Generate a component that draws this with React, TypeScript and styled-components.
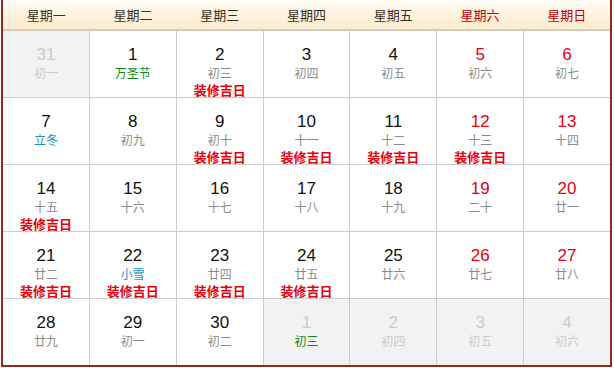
import React from "react";
import styled, { createGlobalStyle } from "styled-components";

const Global = createGlobalStyle`
  html, body { margin: 0; padding: 0; background: #fff; }
  body { font-family: "Liberation Sans", "Noto Sans CJK SC", sans-serif; }
`;

const Frame = styled.div`
  margin-left: 1px;
  width: 611px;
  box-sizing: border-box;
  border-left: 2px solid #8e2c1c;
  border-right: 2px solid #8e2c1c;
  border-bottom: 2px solid #8e2c1c;
`;

const Head = styled.div`
  display: grid;
  grid-template-columns: repeat(7, 1fr);
  height: 29px;
  background: linear-gradient(#fffcf5, #fdebcc);
  border-bottom: 2px solid #d3cbbf;
`;

const HeadCell = styled.div<{ $weekend?: boolean }>`
  display: flex;
  align-items: center;
  justify-content: center;
  font-size: 13px;
  color: ${(p) => (p.$weekend ? "#c0000b" : "#3a2e1e")};
  font-family: "Noto Sans CJK SC", sans-serif;
`;

const Grid = styled.div`
  display: grid;
  grid-template-columns: repeat(7, 1fr);
  grid-auto-rows: 66px;
  gap: 1px;
  background: #cccccc;
`;

const Cell = styled.div<{ $other?: boolean }>`
  background: ${(p) => (p.$other ? "#f2f2f2" : "#fff")};
  display: flex;
  flex-direction: column;
  align-items: center;
  padding-top: 15px;
  box-sizing: border-box;
`;

const Num = styled.div<{ $tone: "normal" | "weekend" | "other" }>`
  font-family: "Liberation Sans", sans-serif;
  font-size: 17px;
  line-height: 18px;
  color: ${(p) =>
    p.$tone === "weekend" ? "#e4000f" : p.$tone === "other" ? "#cccccc" : "#111"};
`;

const Lunar = styled.div<{ $tone: "normal" | "fest" | "term" | "other" }>`
  margin-top: 1px;
  font-family: "Noto Sans CJK SC", sans-serif;
  font-size: 12px;
  line-height: 15px;
  color: ${(p) =>
    p.$tone === "fest"
      ? "#138a13"
      : p.$tone === "term"
      ? "#1a8fc1"
      : p.$tone === "other"
      ? "#cccccc"
      : "#8a8a8a"};
`;

const Tag = styled.div`
  margin-top: 2px;
  font-family: "Noto Sans CJK SC", sans-serif;
  font-size: 13px;
  font-weight: bold;
  line-height: 15px;
  color: #e8000c;
`;

type Day = {
  n: number;
  l: string;
  other?: boolean;
  lt?: "normal" | "fest" | "term" | "other";
  tag?: boolean;
};

const heads = ["星期一", "星期二", "星期三", "星期四", "星期五", "星期六", "星期日"];

const days: Day[] = [
  { n: 31, l: "初一", other: true, lt: "other" },
  { n: 1, l: "万圣节", lt: "fest" },
  { n: 2, l: "初三", tag: true },
  { n: 3, l: "初四" },
  { n: 4, l: "初五" },
  { n: 5, l: "初六" },
  { n: 6, l: "初七" },
  { n: 7, l: "立冬", lt: "term" },
  { n: 8, l: "初九" },
  { n: 9, l: "初十", tag: true },
  { n: 10, l: "十一", tag: true },
  { n: 11, l: "十二", tag: true },
  { n: 12, l: "十三", tag: true },
  { n: 13, l: "十四" },
  { n: 14, l: "十五", tag: true },
  { n: 15, l: "十六" },
  { n: 16, l: "十七" },
  { n: 17, l: "十八" },
  { n: 18, l: "十九" },
  { n: 19, l: "二十" },
  { n: 20, l: "廿一" },
  { n: 21, l: "廿二", tag: true },
  { n: 22, l: "小雪", lt: "term", tag: true },
  { n: 23, l: "廿四", tag: true },
  { n: 24, l: "廿五", tag: true },
  { n: 25, l: "廿六" },
  { n: 26, l: "廿七" },
  { n: 27, l: "廿八" },
  { n: 28, l: "廿九" },
  { n: 29, l: "初一" },
  { n: 30, l: "初二" },
  { n: 1, l: "初三", other: true, lt: "fest" },
  { n: 2, l: "初四", other: true, lt: "other" },
  { n: 3, l: "初五", other: true, lt: "other" },
  { n: 4, l: "初六", other: true, lt: "other" },
];

export default function App() {
  return (
    <>
      <Global />
      <Frame>
        <Head>
          {heads.map((h, i) => (
            <HeadCell key={h} $weekend={i >= 5}>
              {h}
            </HeadCell>
          ))}
        </Head>
        <Grid>
          {days.map((d, i) => {
            const weekend = i % 7 >= 5;
            const tone = d.other ? "other" : weekend ? "weekend" : "normal";
            return (
              <Cell key={i} $other={d.other}>
                <Num $tone={tone}>{d.n}</Num>
                <Lunar $tone={d.lt ?? "normal"}>{d.l}</Lunar>
                {d.tag && <Tag>装修吉日</Tag>}
              </Cell>
            );
          })}
        </Grid>
      </Frame>
    </>
  );
}
